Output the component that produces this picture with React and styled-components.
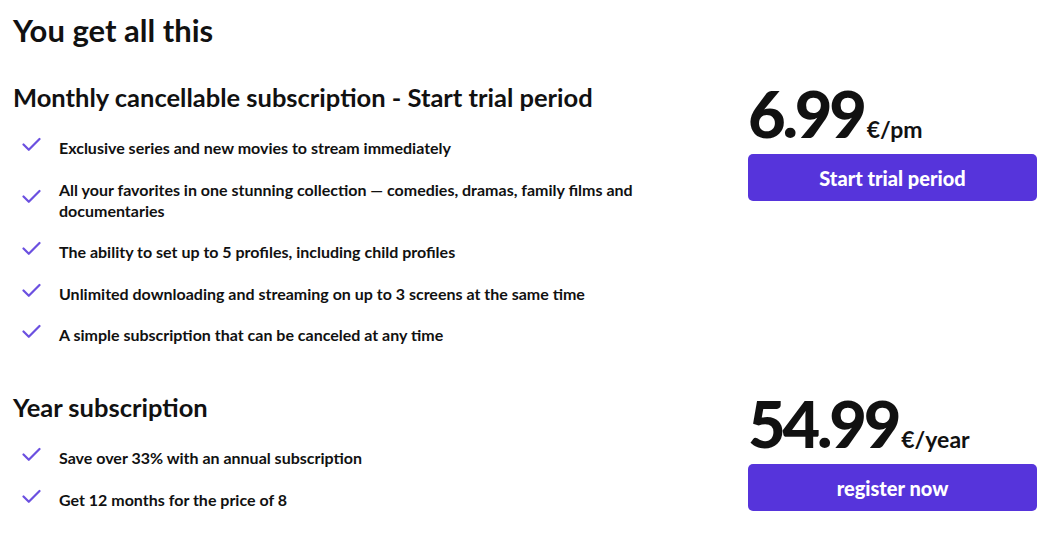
import React from "react";
import styled, { createGlobalStyle } from "styled-components";

const GlobalStyle = createGlobalStyle`
  html, body {
    margin: 0;
    padding: 0;
    background: #ffffff;
  }
  body {
    font-family: "Lato", "Liberation Sans", sans-serif;
    color: #111111;
  }
`;

const Page = styled.div`
  padding: 10px 11px 0 13px;
`;

const MainTitle = styled.h1`
  margin: 0;
  font-size: 31px;
  font-weight: 700;
  line-height: 40px;
`;

const Plan = styled.section`
  display: grid;
  grid-template-columns: 1fr 289px;
  column-gap: 20px;
  margin-top: ${(p) => p.$top}px;
`;

const PlanTitle = styled.h2`
  margin: 0 0 25px;
  font-size: 25.5px;
  font-weight: 700;
  line-height: 30px;
`;

const Features = styled.ul`
  list-style: none;
  margin: 0;
  padding: 0;
  display: flex;
  flex-direction: column;
  gap: 20.5px;
`;

const Feature = styled.li`
  display: flex;
  align-items: flex-start;
  gap: 18px;
  padding-left: 9px;
  font-size: 16px;
  font-weight: 700;
  line-height: 21px;
  max-width: 640px;
`;

const CheckIcon = styled.svg`
  flex: none;
  width: 19px;
  height: 15px;
  margin-top: ${(p) => (p.$mid ? 10 : 0)}px;
`;

const PriceCol = styled.div`
  display: flex;
  flex-direction: column;
  padding-top: 6px;
`;

const Price = styled.div`
  display: flex;
  align-items: baseline;
  gap: 3px;
  line-height: 50px;
`;

const Amount = styled.span`
  font-size: 65px;
  font-weight: 900;
  letter-spacing: -3.2px;
`;

const Unit = styled.span`
  font-size: 23px;
  font-weight: 700;
`;

const Button = styled.button`
  height: 47px;
  width: 100%;
  border: none;
  border-radius: 5px;
  background: #5634db;
  color: #ffffff;
  font-family: inherit;
  font-size: 20px;
  font-weight: 900;
  cursor: pointer;
`;

const Check = ({ mid }) => (
  <CheckIcon $mid={mid} viewBox="0 0 19 15">
    <path
      d="M1.5 7.5 L6.8 12.8 L17.5 2"
      fill="none"
      stroke="#6b50e0"
      strokeWidth="2.2"
      strokeLinecap="round"
      strokeLinejoin="round"
    />
  </CheckIcon>
);

const plans = [
  {
    title: "Monthly cancellable subscription - Start trial period",
    amount: "6.99",
    unit: "€/pm",
    cta: "Start trial period",
    top: 32,
    features: [
      "Exclusive series and new movies to stream immediately",
      "All your favorites in one stunning collection — comedies, dramas, family films and documentaries",
      "The ability to set up to 5 profiles, including child profiles",
      "Unlimited downloading and streaming on up to 3 screens at the same time",
      "A simple subscription that can be canceled at any time",
    ],
  },
  {
    title: "Year subscription",
    amount: "54.99",
    unit: "€/year",
    cta: "register now",
    top: 47,
    features: [
      "Save over 33% with an annual subscription",
      "Get 12 months for the price of 8",
    ],
  },
];

export default function App() {
  return (
    <>
      <GlobalStyle />
      <Page>
        <MainTitle>You get all this</MainTitle>
        {plans.map((plan) => (
          <Plan key={plan.title} $top={plan.top}>
            <div>
              <PlanTitle>{plan.title}</PlanTitle>
              <Features>
                {plan.features.map((f) => (
                  <Feature key={f}>
                    <Check mid={f.length > 80} />
                    <span>{f}</span>
                  </Feature>
                ))}
              </Features>
            </div>
            <PriceCol>
              <Price>
                <Amount>{plan.amount}</Amount>
                <Unit>{plan.unit}</Unit>
              </Price>
              <Button>{plan.cta}</Button>
            </PriceCol>
          </Plan>
        ))}
      </Page>
    </>
  );
}
